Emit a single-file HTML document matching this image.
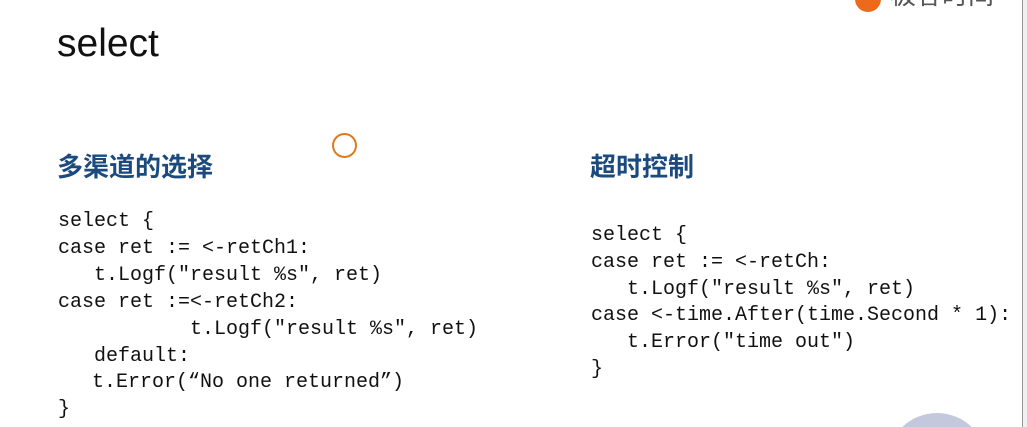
<!DOCTYPE html>
<html style="overflow:hidden;width:1027px;height:427px"><head><meta charset="utf-8"><style>
body{margin:0;width:1027px;height:427px;overflow:hidden;background:#fff;position:relative;font-family:"Liberation Sans","Noto Sans CJK SC",sans-serif}
.a{position:absolute;white-space:pre}
.c{font-family:"Liberation Mono",monospace;font-size:20px;color:#111;line-height:20px}
.h{color:#1b4a7e;font-size:26px;font-weight:bold}
</style></head><body>
<div class="a" style="left:57px;top:22px;font-size:39px;color:#111">select</div>
<div class="a h" style="left:57px;top:147px">多渠道的选择</div>
<div class="a h" style="left:590px;top:147px">超时控制</div>
<div class="a" style="left:332px;top:133px;width:21px;height:21px;border:2.5px solid #e07a1f;border-radius:50%"></div>
<div class="a c" style="left:58px;top:212px">select {</div>
<div class="a c" style="left:58px;top:239px">case ret := &lt;-retCh1:</div>
<div class="a c" style="left:94px;top:266px">t.Logf("result %s", ret)</div>
<div class="a c" style="left:58px;top:293px">case ret :=&lt;-retCh2:</div>
<div class="a c" style="left:190px;top:320px">t.Logf("result %s", ret)</div>
<div class="a c" style="left:94px;top:347px">default:</div>
<div class="a c" style="left:92px;top:373px">t.Error(“No one returned”)</div>
<div class="a c" style="left:58px;top:400px">}</div>
<div class="a c" style="left:591px;top:226px">select {</div>
<div class="a c" style="left:591px;top:253px">case ret := &lt;-retCh:</div>
<div class="a c" style="left:627px;top:280px">t.Logf("result %s", ret)</div>
<div class="a c" style="left:591px;top:306px">case &lt;-time.After(time.Second * 1):</div>
<div class="a c" style="left:627px;top:333px">t.Error("time out")</div>
<div class="a c" style="left:591px;top:360px">}</div>
<div class="a" style="left:887px;top:413px;width:100px;height:14px;overflow:hidden"><div style="width:100px;height:100px;border-radius:50%;background:#c3c8dc"></div></div>
<div class="a" style="left:855px;top:-14px;width:26px;height:26px;border-radius:50%;background:#ec6a1c"></div>
<div class="a" style="left:890px;top:-20px;font-size:26px;line-height:30px;color:#555">极客时间</div>
<div class="a" style="left:1022px;top:0;width:4px;height:427px;background:#f0f0f0;border-left:1px solid #999"></div>
</body></html>
